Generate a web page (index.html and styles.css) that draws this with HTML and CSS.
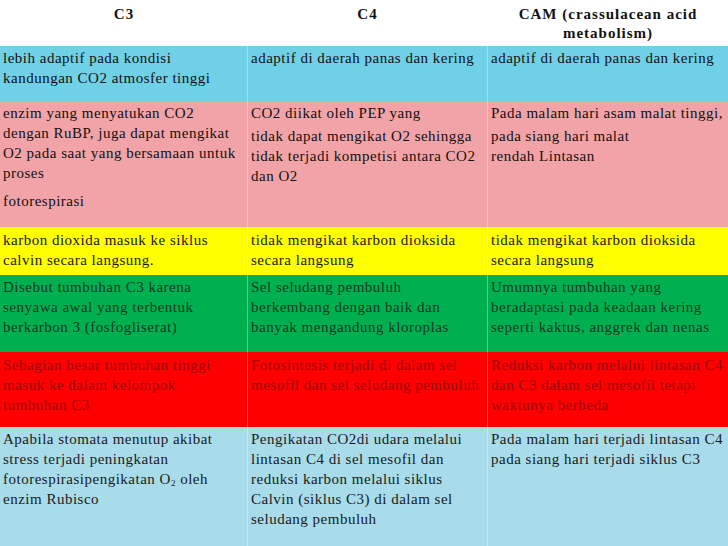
FILE: index.html
```html
<!DOCTYPE html>
<html>
<head>
<meta charset="utf-8">
<link rel="stylesheet" href="styles.css">
</head>
<body>
<div class="table">
  <div class="cell head">C3</div>
  <div class="cell head">C4</div>
  <div class="cell head">CAM (crassulacean acid<br>metabolism)</div>

  <div class="cell r1">lebih adaptif pada kondisi<br>kandungan CO2 atmosfer tinggi</div>
  <div class="cell r1">adaptif di daerah panas dan kering</div>
  <div class="cell r1">adaptif di daerah panas dan kering</div>

  <div class="cell r2"><p>enzim yang menyatukan CO2<br>dengan RuBP, juga dapat mengikat<br>O2 pada saat yang bersamaan untuk<br>proses</p><p class="gap wide">fotorespirasi</p></div>
  <div class="cell r2"><p>CO2 diikat oleh PEP yang</p><p class="gap">tidak dapat mengikat O2 sehingga<br>tidak terjadi kompetisi antara CO2<br>dan O2</p></div>
  <div class="cell r2"><p>Pada malam hari asam malat tinggi,</p><p class="gap">pada siang hari malat<br>rendah Lintasan</p></div>

  <div class="cell r3">karbon dioxida masuk ke siklus<br>calvin secara langsung.</div>
  <div class="cell r3">tidak mengikat karbon dioksida<br>secara langsung</div>
  <div class="cell r3">tidak mengikat karbon dioksida<br>secara langsung</div>

  <div class="cell r4">Disebut tumbuhan C3 karena<br>senyawa awal yang terbentuk<br>berkarbon 3 (fosfogliserat)</div>
  <div class="cell r4">Sel seludang pembuluh<br>berkembang dengan baik dan<br>banyak mengandung kloroplas</div>
  <div class="cell r4">Umumnya tumbuhan yang<br>beradaptasi pada keadaan kering<br>seperti kaktus, anggrek dan nenas</div>

  <div class="cell r5">Sebagian besar tumbuhan tinggi<br>masuk ke dalam kelompok<br>tumbuhan C3</div>
  <div class="cell r5">Fotosintesis terjadi di dalam sel<br>mesofil dan sel seludang pembuluh</div>
  <div class="cell r5">Reduksi karbon melalui lintasan C4<br>dan C3 dalam sel mesofil tetapi<br>waktunya berbeda</div>

  <div class="cell r6">Apabila stomata menutup akibat<br>stress terjadi peningkatan<br>fotorespirasipengikatan O<sub>2</sub> oleh<br>enzim Rubisco</div>
  <div class="cell r6">Pengikatan CO2di udara melalui<br>lintasan C4 di sel mesofil dan<br>reduksi karbon melalui siklus<br>Calvin (siklus C3) di dalam sel<br>seludang pembuluh</div>
  <div class="cell r6">Pada malam hari terjadi lintasan C4<br>pada siang hari terjadi siklus C3</div>
</div>
</body>
</html>
```

FILE: styles.css
```css
html, body {
  margin: 0;
  padding: 0;
  background: #ffffff;
}
body {
  width: 728px;
  height: 546px;
  overflow: hidden;
  font-family: "Liberation Serif", "Times New Roman", serif;
  font-size: 15px;
  letter-spacing: 0.5px;
  color: #111;
}
.table {
  display: grid;
  grid-template-columns: 247px 240px 241px;
  grid-template-rows: 46px 55px 126px 48px 77px 75px 130px;
}
.cell {
  padding: 2px 2px 0 3px;
  line-height: 20px;
  white-space: nowrap;
  border-left: 1px solid rgba(255, 255, 255, 0.35);
}
.cell:nth-child(3n+1) {
  border-left: none;
}
.cell p {
  margin: 0;
}
.cell p.gap {
  margin-top: 3px;
}
.cell p.gap.wide {
  margin-top: 8px;
}
.head {
  text-align: center;
  font-weight: bold;
  letter-spacing: 1px;
  line-height: 19px;
  padding-top: 5px;
  border-left: none;
  color: #111;
}
.r1 { background: #70d0e6; color: #111; }
.r2 { background: #f2a3a7; color: #111; }
.r3 { background: #ffff00; color: #1a1a00; padding-top: 3px; }
.r4 { background: #00b050; color: #0d3a1c; }
.r5 { background: #ff0000; color: #9a0808; padding-top: 3px; }
.r6 { background: #a8dcea; color: #1a1a1a; }
sub {
  font-size: 9px;
  line-height: 0;
  vertical-align: -2px;
}
```
